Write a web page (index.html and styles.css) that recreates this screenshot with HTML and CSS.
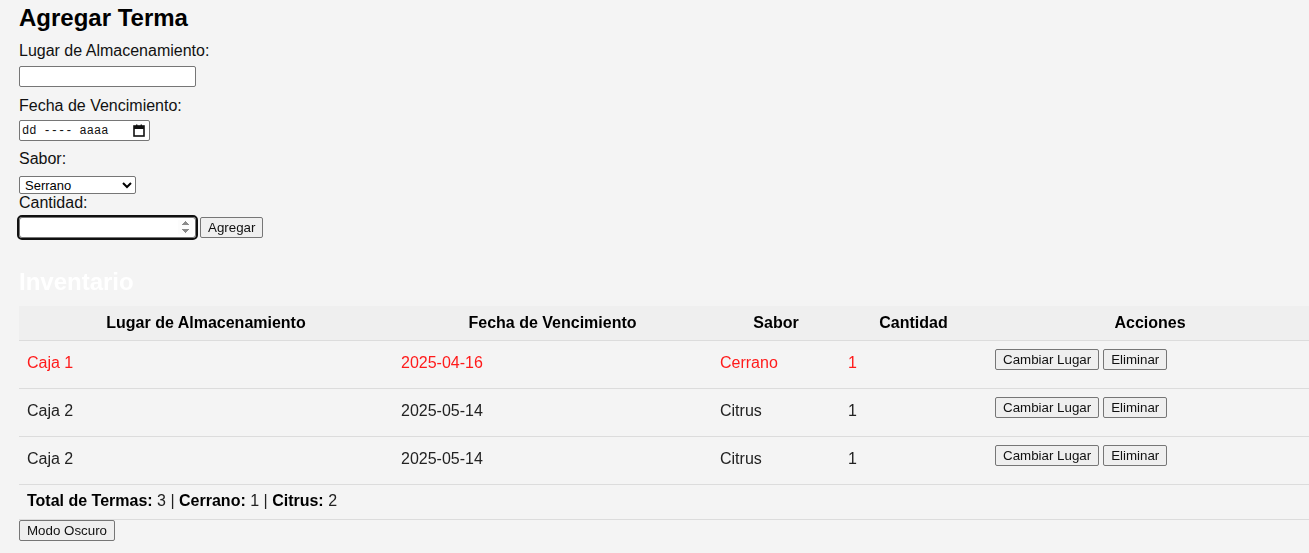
FILE: index.html
```html
<!DOCTYPE html>
<html lang="es">
<head>
<meta charset="utf-8">
<title>Termas</title>
<link rel="stylesheet" href="styles.css">
</head>
<body>
<div class="page">
  <h2 class="title">Agregar Terma</h2>
  <form class="form">
    <label class="lbl lbl-first">Lugar de Almacenamiento:</label>
    <input class="txt" type="text">
    <label class="lbl lbl-2">Fecha de Vencimiento:</label>
    <div class="date">
      <span class="date-text">dd ---- aaaa</span>
      <svg class="cal" width="12" height="13" viewBox="0 0 12 13"><rect x="1" y="2" width="10" height="10" fill="none" stroke="#111" stroke-width="1.6"/><rect x="1" y="2" width="10" height="3" fill="#111"/><rect x="3" y="0.5" width="1.4" height="2" fill="#111"/><rect x="7.6" y="0.5" width="1.4" height="2" fill="#111"/></svg>
    </div>
    <label class="lbl lbl-3">Sabor:</label>
    <select class="sel"><option>Serrano</option><option>Cerrano</option><option>Citrus</option></select>
    <label class="lbl lbl-4">Cantidad:</label>
    <div class="row">
      <input class="num" type="number" autofocus>
      <button type="button" class="btn">Agregar</button>
    </div>
  </form>

  <h2 class="inv">Inventario</h2>
  <table class="tbl">
    <colgroup><col class="c1"><col class="c2"><col class="c3"><col class="c4"><col class="c5"></colgroup>
    <thead>
      <tr><th>Lugar de Almacenamiento</th><th>Fecha de Vencimiento</th><th>Sabor</th><th>Cantidad</th><th>Acciones</th></tr>
    </thead>
    <tbody>
      <tr class="warn"><td>Caja 1</td><td>2025-04-16</td><td>Cerrano</td><td>1</td><td class="act"><div class="acts"><button class="btn">Cambiar Lugar</button><button class="btn">Eliminar</button></div></td></tr>
      <tr><td>Caja 2</td><td>2025-05-14</td><td>Citrus</td><td>1</td><td class="act"><div class="acts"><button class="btn">Cambiar Lugar</button><button class="btn">Eliminar</button></div></td></tr>
      <tr><td>Caja 2</td><td>2025-05-14</td><td>Citrus</td><td>1</td><td class="act"><div class="acts"><button class="btn">Cambiar Lugar</button><button class="btn">Eliminar</button></div></td></tr>
    </tbody>
    <tfoot>
      <tr><td colspan="5" class="total"><b>Total de Termas:</b> 3 | <b>Cerrano:</b> 1 | <b>Citrus:</b> 2</td></tr>
    </tfoot>
  </table>
  <button type="button" class="btn dark">Modo Oscuro</button>
</div>
</body>
</html>
```

FILE: styles.css
```css
html, body {
  margin: 0;
  padding: 0;
  background: #f4f4f4;
  overflow: hidden;
}
body {
  font-family: "Liberation Sans", Arial, sans-serif;
  font-size: 16px;
  color: #222;
}
.page {
  padding: 4px 0 0 19px;
}
.title {
  margin: 0;
  font-size: 24px;
  line-height: 28px;
  font-weight: bold;
  color: #000;
}
.form {
  display: flex;
  flex-direction: column;
  align-items: flex-start;
}
.lbl {
  display: block;
  line-height: 18px;
  color: #111;
}
.lbl-first { margin-top: 10px; margin-bottom: 6px; }
.lbl-2 { margin-top: 10px; margin-bottom: 5px; }
.lbl-3 { margin-top: 9px; margin-bottom: 8px; }
.lbl-4 { margin-top: 0; margin-bottom: 5px; }
.txt {
  box-sizing: border-box;
  width: 177px;
  height: 21px;
  margin: 0;
  border: 1px solid #767676;
  border-radius: 2px;
  background: #fff;
  font-size: 13px;
}
.date {
  box-sizing: border-box;
  width: 131px;
  height: 21px;
  border: 1px solid #767676;
  border-radius: 2px;
  background: #fff;
  display: flex;
  align-items: center;
  justify-content: space-between;
  padding: 0 4px 0 2px;
}
.date-text {
  font-family: "Liberation Mono", "DejaVu Sans Mono", monospace;
  font-size: 12px;
  color: #111;
  white-space: pre;
}
.cal { display: block; }
.sel {
  box-sizing: border-box;
  width: 117px;
  height: 18px;
  margin: 0;
  padding: 0 0 0 1px;
  font-family: "Liberation Sans", Arial, sans-serif;
  font-size: 13px;
  border: 1px solid #767676;
  border-radius: 2px;
  background: #fff;
  color: #000;
}
.row {
  display: flex;
  align-items: center;
  gap: 4px;
}
.num {
  box-sizing: border-box;
  width: 177px;
  height: 21px;
  margin: 0;
  border: 1px solid #767676;
  border-radius: 2px;
  background: #fff;
}
.num:focus {
  outline: 2px solid #101010;
  outline-offset: 0;
  border-radius: 3px;
}
.btn {
  box-sizing: border-box;
  height: 21px;
  margin: 0;
  padding: 1px 7px;
  font-family: "Liberation Sans", Arial, sans-serif;
  font-size: 13.33px;
  color: #111;
  background: #efefef;
  border: 1px solid #767676;
  border-radius: 2px;
}
.inv {
  margin: 30px 0 0;
  font-size: 24px;
  line-height: 28px;
  font-weight: bold;
  color: #fff;
}
.tbl {
  margin-top: 10px;
  width: 1294px;
  border-collapse: collapse;
  table-layout: fixed;
}
.c1 { width: 374px; }
.c2 { width: 319px; }
.c3 { width: 128px; }
.c4 { width: 147px; }
.c5 { width: 326px; }
.tbl th {
  background: #efefef;
  color: #000;
  font-weight: bold;
  text-align: center;
  height: 34px;
  padding: 0 8px;
  line-height: 18px;
  border-bottom: 1px solid #dcdcdc;
  box-sizing: border-box;
}
.tbl tbody td {
  box-sizing: border-box;
  height: 48px;
  padding: 13px 8px 0;
  vertical-align: top;
  text-align: left;
  line-height: 18px;
  border-bottom: 1px solid #dcdcdc;
  color: #222;
}
.tbl tbody td.act {
  padding-top: 8px;
}
.acts {
  display: flex;
  gap: 4px;
}
.tbl tbody tr.warn td {
  color: #ff1a1a;
}
.tbl .total {
  box-sizing: border-box;
  height: 35px;
  padding: 7px 8px 0;
  vertical-align: top;
  line-height: 18px;
  border-bottom: 1px solid #dcdcdc;
  color: #222;
}
.tbl .total b { color: #000; }
.dark {
  display: block;
  margin-top: 0;
}
```
